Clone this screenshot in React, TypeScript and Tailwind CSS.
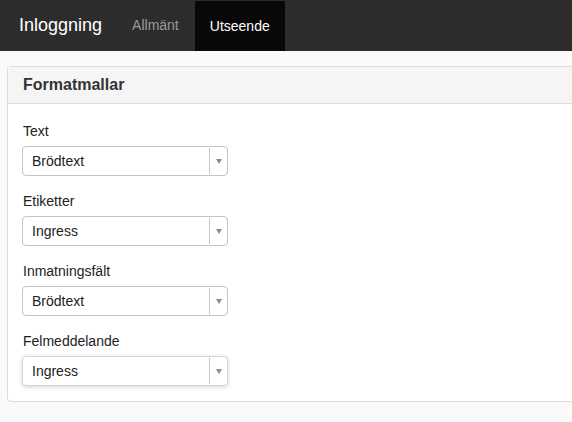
import React from "react";

const fields = [
  { label: "Text", value: "Brödtext" },
  { label: "Etiketter", value: "Ingress" },
  { label: "Inmatningsfält", value: "Brödtext" },
  { label: "Felmeddelande", value: "Ingress", focused: true },
];

function SelectBox({ value, focused }: { value: string; focused?: boolean }) {
  return (
    <div
      className={
        "flex h-[30px] w-[206px] items-stretch rounded-[4px] border bg-white " +
        (focused ? "border-[#d6d6d6] shadow-[0_1px_4px_rgba(0,0,0,0.18)]" : "border-[#c4c4c4]")
      }
    >
      <span className="flex flex-1 items-center pl-[9px] text-[14px] text-[#222]">{value}</span>
      <span className="my-px w-px bg-[#c4c4c4]" />
      <span className="flex w-[17px] items-center justify-center">
        <svg width="6" height="5" viewBox="0 0 6 5">
          <path d="M0 0h6L3 5z" fill="#8a8a8a" />
        </svg>
      </span>
    </div>
  );
}

export default function App() {
  return (
    <div className="min-h-[422px] overflow-hidden bg-[#fafafa] font-['Liberation_Sans',Arial,sans-serif]">
      <nav className="flex h-[51px] items-stretch bg-[#2c2c2c]">
        <span className="flex items-center pl-[19px] pr-[27px] text-[18px] text-white">Inloggning</span>
        <span className="flex items-center px-[3px] text-[14px] text-[#9a9a9a]">Allmänt</span>
        <span className="ml-[13px] mt-px flex w-[90px] items-center justify-center bg-[#080808] text-[14px] text-white">
          Utseende
        </span>
      </nav>

      <section className="ml-[7px] mt-[15px] w-[600px] rounded-[4px] border border-[#dcdcdc] bg-white">
        <header className="flex h-[37px] items-center border-b border-[#dcdcdc] bg-[#f5f5f5] pl-[15px] text-[16px] font-bold text-[#333]">
          Formatmallar
        </header>
        <div className="flex flex-col gap-[15px] pb-[15px] pl-[14px] pt-[17px]">
          {fields.map((f) => (
            <div key={f.label}>
              <label className="mb-[5px] block h-[20px] pl-px text-[14px] leading-[20px] text-[#222]">{f.label}</label>
              <SelectBox value={f.value} focused={f.focused} />
            </div>
          ))}
        </div>
      </section>
    </div>
  );
}
